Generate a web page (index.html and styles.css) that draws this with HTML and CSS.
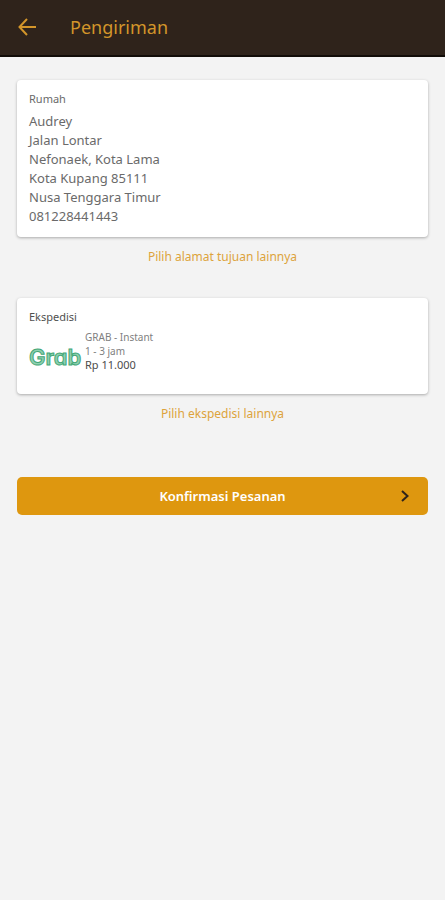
FILE: index.html
```html
<!DOCTYPE html>
<html lang="id">
<head>
<meta charset="utf-8">
<meta name="viewport" content="width=device-width, initial-scale=1">
<title>Pengiriman</title>
<link rel="stylesheet" href="styles.css">
</head>
<body>
<header class="appbar">
  <button class="back" type="button" aria-label="Kembali">
    <svg width="18" height="18" viewBox="0 0 18 18" aria-hidden="true"><path d="M18 9H2M9 1L1.500 9L9 17"/></svg>
  </button>
  <h1 class="title">Pengiriman</h1>
</header>
<main class="content">
  <section class="card address">
    <h2 class="label">Rumah</h2>
    <address class="lines">Audrey<br>Jalan Lontar<br>Nefonaek, Kota Lama<br>Kota Kupang 85111<br>Nusa Tenggara Timur<br>081228441443</address>
  </section>
  <a class="link" href="#alamat">Pilih alamat tujuan lainnya</a>
  <section class="card courier">
    <h2 class="label dark">Ekspedisi</h2>
    <div class="option">
      <span class="logo">Grab</span>
      <div class="details">
        <p>GRAB - Instant</p>
        <p>1 - 3 jam</p>
        <p class="price">Rp 11.000</p>
      </div>
    </div>
  </section>
  <a class="link" href="#ekspedisi">Pilih ekspedisi lainnya</a>
  <button class="confirm" type="button">
    <span class="confirm-text">Konfirmasi Pesanan</span>
    <svg width="8" height="12" viewBox="0 0 8 12" aria-hidden="true"><path d="M1 1L6.500 6L1 11"/></svg>
  </button>
</main>
</body>
</html>
```
FILE: styles.css
```css
* { box-sizing: border-box; }
body {
  margin: 0;
  min-height: 100vh;
  background: #f3f3f3;
  color: #6a6a6a;
  font-family: "Noto Sans", sans-serif;
}
h1, h2, p { margin: 0; font-weight: 400; }
svg { display: block; fill: none; }
.appbar {
  display: flex;
  align-items: center;
  gap: 34px;
  height: 57px;
  padding: 0 18px 2px;
  background: #2f231b;
  border-bottom: 2px solid #120c08;
}
.back { padding: 0; border: 0; background: none; }
.back svg { stroke: #d3952a; stroke-width: 2; }
.title { color: #d3952a; font-size: 18px; line-height: 26px; }
.content {
  display: flex;
  flex-direction: column;
  padding: 23px 17px;
}
.card {
  padding: 11px 12px;
  background: #fff;
  border-radius: 4px;
  box-shadow: 0 1px 3px rgba(0, 0, 0, .3);
}
.address { min-height: 157px; }
.courier { min-height: 96px; margin-top: 31px; }
.label { font-size: 11px; line-height: 16px; }
.dark { color: #505050; }
.lines {
  margin-top: 5px;
  font-size: 13px;
  font-style: normal;
  line-height: 19px;
}
.link {
  align-self: center;
  margin-top: 10px;
  color: #dda33c;
  font-size: 12px;
  line-height: 20px;
  text-decoration: none;
}
.option { display: flex; align-items: flex-end; gap: 4px; margin-top: 5px; }
.logo {
  width: 52px;
  color: #8fd0b0;
  font-family: Inter, sans-serif;
  font-size: 22px;
  font-weight: 600;
  font-feature-settings: "cv11";
  line-height: 30px;
  -webkit-text-stroke: 1px #43a777;
}
.details { color: #808080; font-size: 10px; line-height: 14px; }
.price { color: #4c4c4c; font-size: 11px; }
.confirm {
  display: grid;
  grid-template-columns: 1fr auto 1fr;
  align-items: center;
  height: 38px;
  margin-top: 53px;
  padding: 0 19px;
  border: 0;
  border-radius: 5px;
  background: #de970f;
  color: #fff;
  font-family: inherit;
  font-size: 13px;
  font-weight: 600;
}
.confirm-text { grid-column: 2; }
.confirm svg { justify-self: end; stroke: #2f231b; stroke-width: 2; }
```
